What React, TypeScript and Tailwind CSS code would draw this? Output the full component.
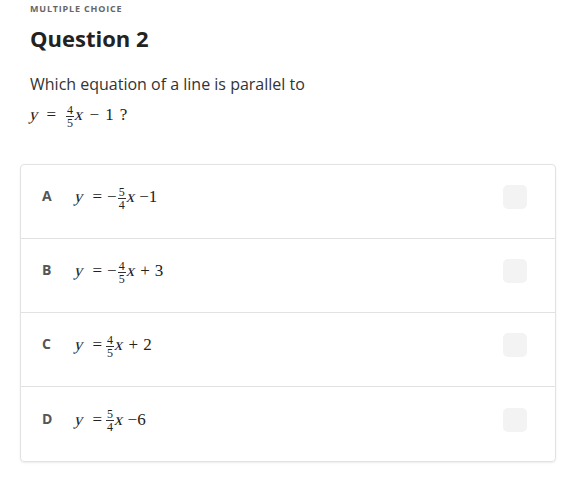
import React from 'react';

const Frac = ({ n, d }: { n: string; d: string }) => (
  <span className="font-['Liberation_Serif'] not-italic inline-flex flex-col items-center align-middle mx-[1px] text-[12px] leading-[12px] relative top-[1px]">
    <span className="px-[1px]">{n}</span>
    <span className="block w-full h-px bg-[#333]" />
    <span className="px-[1px]">{d}</span>
  </span>
);

// slanted variable drawn from the upright serif face
const V = ({ c }: { c: string }) => (
  <span className="font-['Liberation_Serif'] not-italic inline-block -skew-x-[14deg]">{c}</span>
);

const Eq = ({ children }: { children: React.ReactNode }) => (
  <span className="font-['Liberation_Serif'] text-[17px] text-[#222] whitespace-nowrap inline-flex items-center">
    {children}
  </span>
);

const options = [
  {
    letter: 'A',
    eq: (
      <>
        <V c="y" />
        <span className="ml-[9px] mr-[5px]">=</span>
        <span>−</span>
        <Frac n="5" d="4" />
        <V c="x" />
        <span className="ml-[4px]">−1</span>
      </>
    ),
  },
  {
    letter: 'B',
    eq: (
      <>
        <V c="y" />
        <span className="ml-[9px] mr-[5px]">=</span>
        <span>−</span>
        <Frac n="4" d="5" />
        <V c="x" />
        <span className="mx-[5px]">+</span>
        <span>3</span>
      </>
    ),
  },
  {
    letter: 'C',
    eq: (
      <>
        <V c="y" />
        <span className="ml-[9px] mr-[3px]">=</span>
        <Frac n="4" d="5" />
        <V c="x" />
        <span className="mx-[5px]">+</span>
        <span>2</span>
      </>
    ),
  },
  {
    letter: 'D',
    eq: (
      <>
        <V c="y" />
        <span className="ml-[9px] mr-[3px]">=</span>
        <Frac n="5" d="4" />
        <V c="x" />
        <span className="ml-[4px]">−6</span>
      </>
    ),
  },
];

export default function App() {
  return (
    <div className="min-h-screen bg-white font-['Open_Sans'] text-[#222] pt-[3px] pl-[20px] pr-[23px]">
      <div className="pl-[10px]">
        <div className="text-[9px] font-bold tracking-[0.09em] text-[#666] leading-[12px]">MULTIPLE CHOICE</div>
        <h1 className="mt-[8px] text-[22px] font-bold leading-[30px] text-[#222]">Question 2</h1>
        <p className="mt-[19px] text-[16px] leading-[24px] text-[#333]">Which equation of a line is parallel to</p>
        <div className="mt-[3px] h-[32px] flex items-center">
          <Eq>
            <V c="y" />
            <span className="ml-[8px] mr-[9px]">=</span>
            <Frac n="4" d="5" />
            <V c="x" />
            <span className="mx-[6px]">−</span>
            <span>1</span>
            <span className="ml-[6px]">?</span>
          </Eq>
        </div>
      </div>
      <div className="mt-[33px] border border-[#e2e2e2] rounded-[4px] shadow-[0_1px_2px_rgba(0,0,0,0.08)]">
        {options.map((o, i) => (
          <div
            key={o.letter}
            className={`h-[74px] flex items-center pl-[21px] pr-[28px] pb-[9px] ${i < options.length - 1 ? 'border-b border-[#e2e2e2]' : ''}`}
          >
            <span className="w-[12px] text-[14px] font-bold text-[#555] -mt-[3px]">{o.letter}</span>
            <span className="ml-[21px] flex items-center">
              <Eq>{o.eq}</Eq>
            </span>
            <span className="ml-auto w-[24px] h-[24px] rounded-[5px] bg-[#f3f3f3]" />
          </div>
        ))}
      </div>
    </div>
  );
}
